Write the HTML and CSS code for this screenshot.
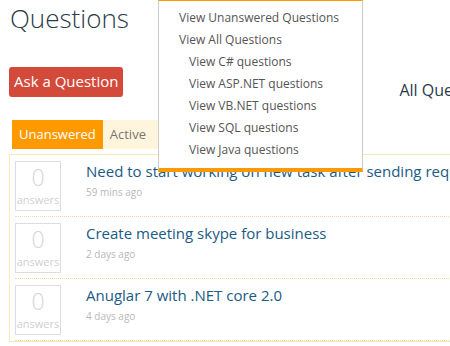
FILE: index.html
```html
<!DOCTYPE html>
<html lang="en">
<head>
  <meta charset="UTF-8">
  <meta name="viewport" content="width=device-width, initial-scale=1.0">
  <title>Questions</title>
  <link rel="stylesheet" href="styles.css">
</head>
<body>
  <div class="page">
    <h1 class="title">Questions</h1>

    <div class="toolbar">
      <a class="btn-ask" href="#">Ask a Question</a>
      <h3 class="list-title">All Questions</h3>
    </div>

    <ul class="tabs clearfix">
      <li class="active">Unanswered</li>
      <li>Active</li>
      <li>Newest</li>
    </ul>

    <div class="question-list">
      <div class="question">
        <div class="answers"><span class="num">0</span><span class="label">answers</span></div>
        <div class="summary">
          <a class="q-title" href="#">Need to start working on new task after sending request</a>
          <div class="q-time">59 mins ago</div>
        </div>
      </div>
      <div class="question">
        <div class="answers"><span class="num">0</span><span class="label">answers</span></div>
        <div class="summary">
          <a class="q-title" href="#">Create meeting skype for business</a>
          <div class="q-time">2 days ago</div>
        </div>
      </div>
      <div class="question">
        <div class="answers"><span class="num">0</span><span class="label">answers</span></div>
        <div class="summary">
          <a class="q-title" href="#">Anuglar 7 with .NET core 2.0</a>
          <div class="q-time">4 days ago</div>
        </div>
      </div>
    </div>
  </div>

  <!-- dropdown from the top nav -->
  <ul class="dropdown">
    <li><a href="#">View Unanswered Questions</a></li>
    <li><a href="#">View All Questions</a></li>
    <li class="sub"><a href="#">View C# questions</a></li>
    <li class="sub"><a href="#">View ASP.NET questions</a></li>
    <li class="sub"><a href="#">View VB.NET questions</a></li>
    <li class="sub"><a href="#">View SQL questions</a></li>
    <li class="sub"><a href="#">View Java questions</a></li>
  </ul>
</body>
</html>
```

FILE: styles.css
```css
* { margin: 0; padding: 0; box-sizing: border-box; }
html, body { overflow: hidden; }
body { font-family: "Open Sans", "Noto Sans", sans-serif; color: #333; background: #fff; }
a { text-decoration: none; }
ul { list-style: none; }
.clearfix:after { content: ""; clear: both; display: block; height: 0; }

.page { width: 760px; padding: 0 10px 0 9px; }

.title { font-size: 26px; font-weight: 300; color: #2b3a4a; line-height: 36px; margin-left: 1px; }

.toolbar { display: flex; align-items: center; margin-top: 27px; }
.btn-ask { display: block; background: #d44a3a; color: #fff; font-size: 15px; height: 30px; line-height: 29px; padding: 0 5px; border-radius: 3px; }
.list-title { font-size: 16px; font-weight: 400; color: #2b3a4a; margin-left: 276px; margin-top: 16px; }

.tabs { margin-top: 19px; margin-left: 3px; }
.tabs li { float: left; height: 29px; line-height: 29px; padding: 0 7px; font-size: 13px; background: #fff5dc; color: #777; }
.tabs li.active { background: #ff9900; color: #fff; }

.question-list { margin-top: 5px; border: 1px solid #fde8b8; padding: 0 0 0 5px; }
.question { display: flex; height: 62px; padding-top: 6px; border-bottom: 1px dotted #f6d9a6; }
.answers { width: 46px; height: 50px; border: 1px solid #ddd; display: flex; flex-direction: column; align-items: center; }
.answers .num { font-size: 23px; line-height: 30px; color: #d6d6d6; font-weight: 300; }
.answers .label { font-size: 11px; line-height: 16px; color: #d0d0d0; }
.summary { margin-left: 25px; white-space: nowrap; }
.q-title { display: block; font-size: 15px; line-height: 22px; color: #1a5a86; margin-top: -1px; }
.q-time { font-size: 10px; color: #b8b8b8; margin-top: 3px; }

.dropdown { position: absolute; left: 158px; top: 0; width: 205px; height: 172px; background: #fff; border: 1px solid #ccc; border-top: 1px solid #ff9900; border-bottom: 4px solid #ff9900; padding-top: 4px; z-index: 10; }
.dropdown li { height: 22px; line-height: 22px; padding-left: 20px; }
.dropdown li.sub { padding-left: 30px; }
.dropdown a { font-size: 12px; color: #555; }
```
